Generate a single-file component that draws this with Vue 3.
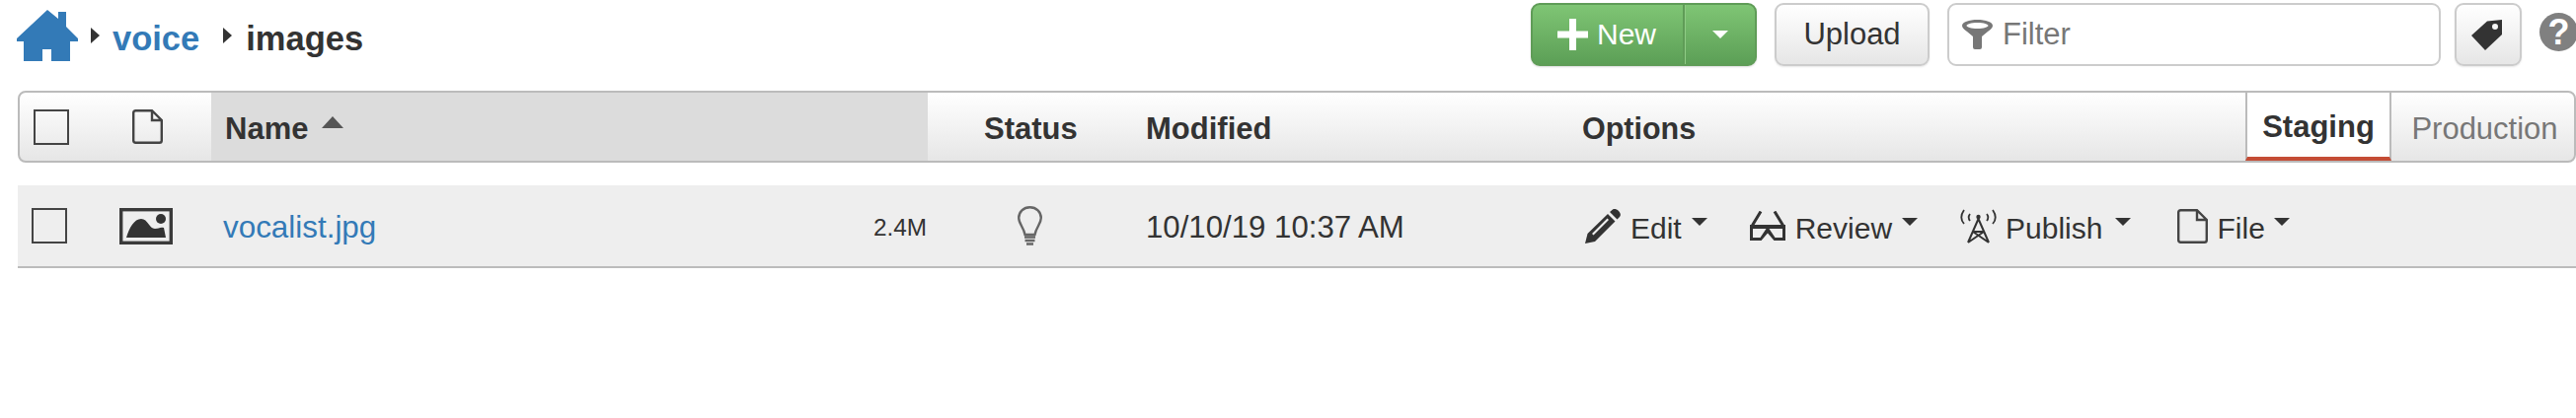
<script setup>
const header = ["Status", "Modified", "Options"];
</script>

<template>
  <div class="page">
    <div class="topbar">
      <nav class="crumbs">
        <svg class="home" width="62" height="52" viewBox="0 0 62 52">
          <path d="M31 0 L42 9 V2 H50 V17 L62 29 V32 H54 V52 H35 V40 H26 V52 H7 V32 H0 V29 Z" fill="#337ab7" />
        </svg>
        <span class="arrow"></span>
        <a class="crumb-link">voice</a>
        <span class="arrow second"></span>
        <span class="crumb-current">images</span>
      </nav>

      <div class="btn-new">
        <span class="new-main">
          <svg width="31" height="32" viewBox="0 0 31 32">
            <path d="M12 0 H19 V12.500 H31 V19.500 H19 V32 H12 V19.500 H0 V12.500 H12 Z" fill="#fff" />
          </svg>
          New
        </span>
        <span class="new-caret"><i class="caret white"></i></span>
      </div>
      <button class="btn upload">Upload</button>
      <div class="filter">
        <svg width="31" height="30" viewBox="0 0 31 30">
          <path fill-rule="evenodd" d="M15.500 0 C24 0 31 2.500 31 6 C31 8 29 10 26 12 L20 17 V28 Q20 30 18 30 H13 Q11 30 11 28 V17 L5 12 C2 10 0 8 0 6 C0 2.500 7 0 15.500 0 Z M15.500 3 C9 3 4.500 4.500 4.500 6 C4.500 7.500 9 9 15.500 9 C22 9 26.500 7.500 26.500 6 C26.500 4.500 22 3 15.500 3 Z" fill="#777" />
        </svg>
        <span>Filter</span>
      </div>
      <button class="btn tag">
        <svg width="31" height="31" viewBox="0 0 31 31">
          <path fill-rule="evenodd" d="M16 1.500 L31 0 V15 L14 31 L0 16 Z M24 4 A3 3 0 1 0 24 10 A3 3 0 1 0 24 4 Z" fill="#333" />
        </svg>
      </button>
      <span class="help">?</span>
    </div>

    <div class="thead grid">
      <div class="cell sel"><span class="checkbox"></span></div>
      <div class="cell kind">
        <svg width="31" height="35" viewBox="0 0 31 35">
          <path d="M3.500 1.200 H20 L29.800 11 V31.500 Q29.800 33.800 27.500 33.800 H3.500 Q1.200 33.800 1.200 31.500 V3.500 Q1.200 1.200 3.500 1.200 Z M20 1.200 V11 H29.800" fill="none" stroke="#444" stroke-width="2.400" />
        </svg>
      </div>
      <div class="cell name-head">
        Name
        <i class="sort"></i>
      </div>
      <div v-for="title in header" :key="title" class="cell title">{{ title }}</div>
      <div class="tabs">
        <span class="tab active">Staging</span>
        <span class="tab">Production</span>
      </div>
    </div>

    <div class="row grid">
      <div class="cell row-sel"><span class="checkbox"></span></div>
      <div class="cell row-kind">
        <svg width="54" height="37" viewBox="0 0 54 37">
          <rect x="1.700" y="1.700" width="50.600" height="33.600" fill="none" stroke="#3a3a3a" stroke-width="3.400" />
          <path d="M7 30 C10 20 15 11 22 11 C29 11 30 21 36 21 C40 21 41 19 45 20 L47 30 Z" fill="#333" />
          <circle cx="42" cy="11" r="5" fill="#333" />
        </svg>
      </div>
      <div class="cell row-name">
        <a class="file-link">vocalist.jpg</a>
        <span class="size">2.4M</span>
      </div>
      <div class="cell row-status">
        <svg width="25" height="40" viewBox="0 0 25 40">
          <path d="M12.500 1.200 C6 1.200 1.200 6 1.200 12 C1.200 18 6 21 7.500 29 H17.500 C19 21 23.800 18 23.800 12 C23.800 6 19 1.200 12.500 1.200 Z" fill="none" stroke="#666" stroke-width="2.400" />
          <path d="M7 31.500 H18 M7.500 35 H17.500 M9 38.500 H16" fill="none" stroke="#666" stroke-width="2.400" />
        </svg>
      </div>
      <div class="cell row-date">10/10/19 10:37 AM</div>
      <div class="cell row-actions">
        <span class="action">
          <svg width="36" height="35" viewBox="0 0 36 35">
            <path fill-rule="evenodd" d="M25 3 L28 0.500 C29.500 -0.500 32 0 34 2 C36 4 36.500 6.500 35 8 L32.500 10.500 Z M23 5 L30.500 12.500 L10 33 L0 35 L2.500 25 Z M22.500 9.500 L7 25 L8.500 26.500 L24 11 Z" fill="#333" />
          </svg>
          <span>Edit</span>
          <i class="caret"></i>
        </span>
        <span class="action">
          <svg width="36" height="30" viewBox="0 0 36 30">
            <path d="M11 0.500 L2.500 14.500 M25 0.500 L33.500 14.500" fill="none" stroke="#333" stroke-width="3" />
            <path fill-rule="evenodd" d="M0 14 H36 V30 H24.500 L18 22.500 L11.500 30 H0 Z M3 18 V27 H10.500 L16.500 18 Z M19.500 18 L25.500 27 H33 V18 Z" fill="#333" />
          </svg>
          <span>Review</span>
          <i class="caret"></i>
        </span>
        <span class="action publish">
          <svg width="37" height="35" viewBox="0 0 37 35">
            <circle cx="18.500" cy="8" r="2.200" fill="#333" />
            <path d="M18.500 10 L8 34 M18.500 10 L29 34 M13 23 L29 34 M24 23 L8 34 M13 23 H24" fill="none" stroke="#333" stroke-width="2" />
            <path d="M4 1 C0.500 6 0.500 11 4 15 M33 1 C36.500 6 36.500 11 33 15 M10 5 C8.500 7 8.500 10 10 12 M27 5 C28.500 7 28.500 10 27 12" fill="none" stroke="#333" stroke-width="1.800" />
          </svg>
          <span>Publish</span>
          <i class="caret"></i>
        </span>
        <span class="action file">
          <svg width="31" height="35" viewBox="0 0 31 35">
            <path d="M3.500 1.200 H20 L29.800 11 V31.500 Q29.800 33.800 27.500 33.800 H3.500 Q1.200 33.800 1.200 31.500 V3.500 Q1.200 1.200 3.500 1.200 Z M20 1.200 V11 H29.800" fill="none" stroke="#444" stroke-width="2.400" />
          </svg>
          <span>File</span>
          <i class="caret"></i>
        </span>
      </div>
    </div>
  </div>
</template>

<style scoped>
.page {
  width: 2610px;
  height: 424px;
  overflow: hidden;
  background: #fff;
  color: #333;
  font-family: "Liberation Sans", Arial, sans-serif;
  font-size: 31px;
}

.topbar {
  display: flex;
  align-items: flex-start;
  width: 2640px;
  height: 64px;
  padding: 3px 0 0 17px;
  margin-bottom: 25px;
}

.crumbs {
  flex: 0 0 1534px;
  display: flex;
  align-items: center;
  height: 64px;
  font-size: 34.500px;
  font-weight: 700;
}

.home {
  margin: 2px 13px 0 0;
}

.arrow {
  width: 0;
  height: 0;
  margin: 2px 13px 0 0;
  border-top: 8px solid transparent;
  border-bottom: 8px solid transparent;
  border-left: 9px solid #333;
}

.arrow.second {
  margin-left: 24px;
  margin-right: 14px;
}

.crumb-link,
.crumb-current {
  padding-top: 8px;
}

.crumb-link {
  color: #337ab7;
}

.btn-new {
  display: flex;
  width: 229px;
  height: 64px;
  color: #fff;
  background: linear-gradient(#7fc574, #5c9f56);
  border: 2px solid #5f9c57;
  border-radius: 9px;
  box-sizing: border-box;
  box-shadow: 0 1px 2px rgba(0, 0, 0, 0.15);
}

.new-main {
  display: flex;
  align-items: center;
  gap: 9px;
  width: 154px;
  padding-left: 25px;
  font-size: 30px;
  box-sizing: border-box;
  border-right: 2px solid #5f9c57;
}

.new-caret {
  flex: 1;
  display: flex;
  align-items: center;
  padding-left: 27px;
  border-left: 1px solid #8fcb85;
}

.btn {
  height: 64px;
  padding: 0;
  color: #333;
  font: inherit;
  background: linear-gradient(#fff, #e6e6e6);
  border: 2px solid #ccc;
  border-radius: 9px;
  box-sizing: border-box;
  box-shadow: 0 1px 2px rgba(0, 0, 0, 0.1);
}

.upload {
  width: 157px;
  margin-left: 18px;
}

.filter {
  display: flex;
  align-items: center;
  gap: 10px;
  width: 500px;
  height: 64px;
  margin-left: 18px;
  padding-left: 13px;
  color: #777;
  background: #fff;
  border: 2px solid #ccc;
  border-radius: 9px;
  box-sizing: border-box;
}

.tag {
  display: flex;
  align-items: center;
  justify-content: center;
  width: 68px;
  margin-left: 14px;
}

.tag svg {
  margin-left: -4px;
}

.help {
  display: flex;
  align-items: center;
  justify-content: center;
  width: 39px;
  height: 39px;
  margin: 10px 0 0 18px;
  color: #fff;
  background: #808080;
  border-radius: 50%;
  font-size: 36px;
  font-weight: 700;
}

.grid {
  display: grid;
  grid-template-columns: 90px 106px 726px 221px 442px 672px 335px;
  width: 2592px;
  margin-left: 18px;
  box-sizing: border-box;
}

.thead {
  height: 73px;
  background: linear-gradient(#fff, #e6e6e6);
  border: 2px solid #bbb;
  border-radius: 8px;
  margin-bottom: 23px;
  overflow: hidden;
  grid-template-columns: 88px 106px 726px 221px 442px 672px 335px;
}

.cell {
  display: flex;
  align-items: center;
}

.checkbox {
  display: block;
  width: 36px;
  height: 36px;
  border: 2.500px solid #444;
  box-sizing: border-box;
}

.sel {
  padding-left: 14px;
}

.kind {
  padding-left: 26px;
}

.name-head {
  padding: 4px 0 0 14px;
  font-weight: 700;
  background: #dcdcdc;
}

.sort {
  width: 0;
  height: 0;
  margin: -14px 0 0 14px;
  border-left: 11px solid transparent;
  border-right: 11px solid transparent;
  border-bottom: 12px solid #555;
}

.title {
  padding-top: 4px;
  font-weight: 700;
}

.title:nth-of-type(4) {
  padding-left: 57px;
}

.title:nth-of-type(6) {
  font-size: 30.500px;
}

.tabs {
  display: flex;
  height: 69px;
}

.tab {
  display: flex;
  align-items: center;
  justify-content: center;
  padding-top: 4px;
  color: #777;
  box-sizing: border-box;
}

.tab.active {
  width: 148px;
  color: #333;
  font-weight: 700;
  background: #fff;
  border-left: 2px solid #bbb;
  border-right: 2px solid #bbb;
  border-bottom: 4px solid #c44c35;
}

.tab:not(.active) {
  flex: 1;
  padding-left: 2px;
}

.row {
  height: 84px;
  background: #eee;
  border-bottom: 2px solid #bbb;
}

.row-sel {
  padding-left: 14px;
}

.row-kind {
  padding-left: 13px;
}

.row-name {
  justify-content: space-between;
  padding: 0 1px 0 12px;
}

.file-link {
  padding-top: 4px;
  color: #337ab7;
  font-size: 31.400px;
}

.size {
  padding-top: 4px;
  font-size: 24.300px;
}

.row-status {
  padding-left: 91px;
}

.row-date {
  padding-top: 4px;
  font-size: 31.200px;
}

.row-actions {
  gap: 43px;
  padding-left: 3px;
  font-size: 30px;
}

.action {
  display: flex;
  align-items: center;
  gap: 10px;
}

.action span {
  padding-top: 6px;
}

.publish {
  gap: 9px;
}

.publish span {
  margin-right: 4px;
}

.file {
  gap: 9px;
  margin-left: 4px;
}

.caret {
  width: 0;
  height: 0;
  margin-top: -8px;
  border-left: 8.500px solid transparent;
  border-right: 8.500px solid transparent;
  border-top: 8.500px solid #333;
}

.caret.white {
  margin-top: 0;
  border-top-color: #fff;
}
</style>

<style>
html,
body {
  margin: 0;
  background: #fff;
}
</style>
